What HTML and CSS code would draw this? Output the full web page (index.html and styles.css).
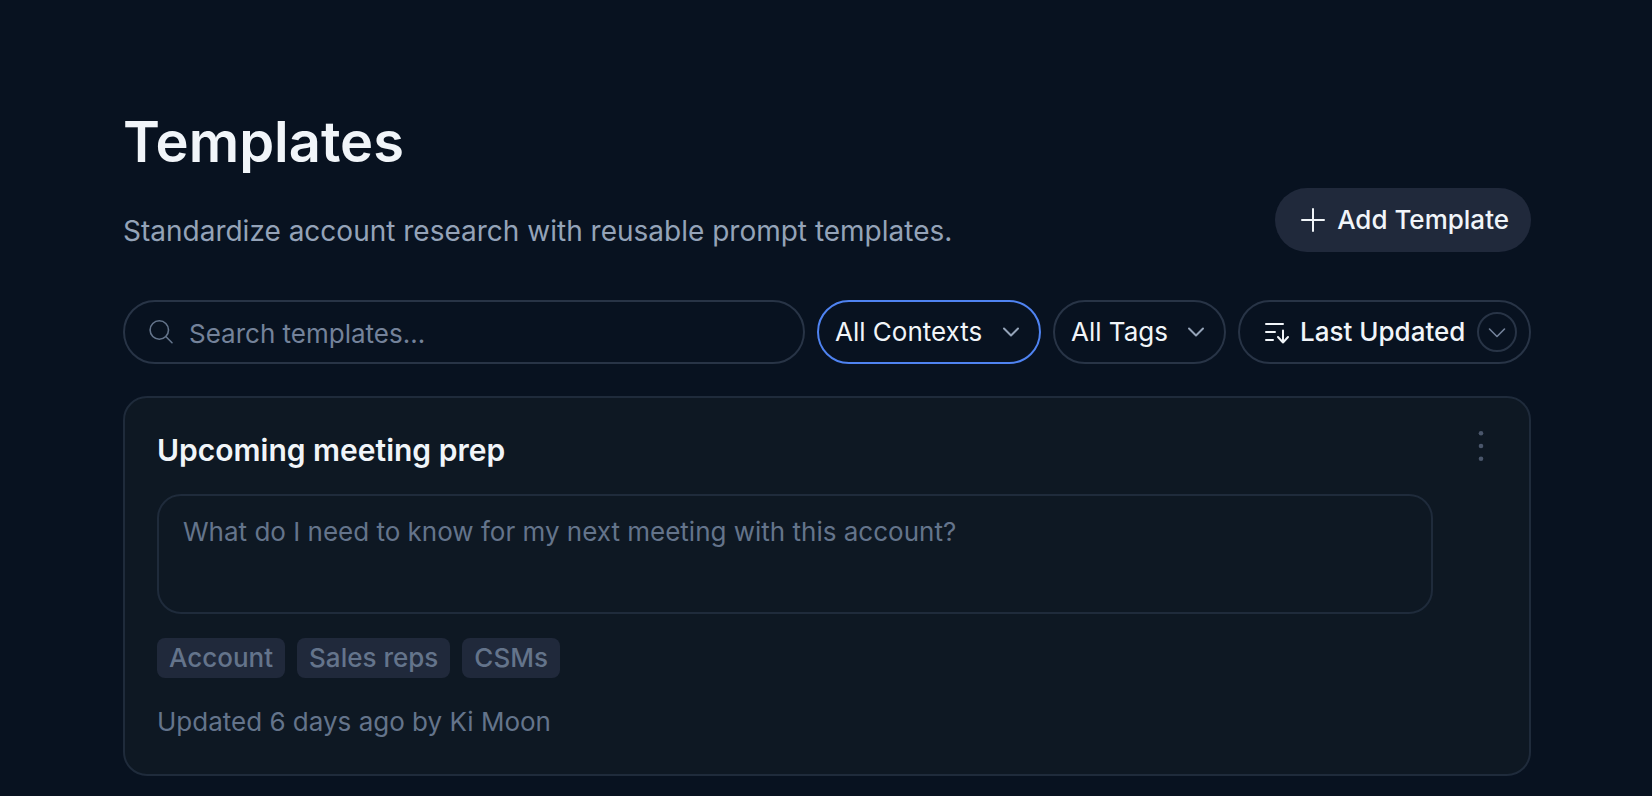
FILE: index.html
```html
<!DOCTYPE html>
<html lang="en">
<head>
<meta charset="utf-8">
<meta name="viewport" content="width=device-width, initial-scale=1">
<title>Templates</title>
<link rel="stylesheet" href="styles.css">
</head>
<body>
<main class="page">
  <header class="page-header">
    <div class="heading">
      <h1 class="title">Templates</h1>
      <p class="subtitle">Standardize account research with reusable prompt templates.</p>
    </div>
    <button class="add-button" type="button">
      <svg class="icon-md" viewBox="0 0 28 28" aria-hidden="true"><path d="M14 3v22M3 14h22"/></svg>
      Add Template
    </button>
  </header>

  <form class="filters">
    <label class="pill search">
      <svg class="icon-md icon-thin" viewBox="0 0 28 28" aria-hidden="true"><circle cx="12.300" cy="12" r="9.200"/><path d="M18.800 18.500l6.200 6.200"/></svg>
      <input class="search-input" type="search" placeholder="Search templates..." aria-label="Search templates">
    </label>
    <label class="pill dropdown dropdown-active">
      <select class="select" aria-label="Context"><option>All Contexts</option></select>
      <svg class="icon-sm" viewBox="0 0 24 24" aria-hidden="true"><path d="M5 8.500l7 7 7-7"/></svg>
    </label>
    <label class="pill dropdown">
      <select class="select" aria-label="Tag"><option>All Tags</option></select>
      <svg class="icon-sm" viewBox="0 0 24 24" aria-hidden="true"><path d="M5 8.500l7 7 7-7"/></svg>
    </label>
    <label class="pill sort">
      <svg class="sort-icon" viewBox="0 0 26 26" aria-hidden="true"><path d="M2 5h17M2 13h9M2 21h7M19 11.500v12M14 18l5 5.500 5-5.500"/></svg>
      <select class="select select-strong" aria-label="Sort by"><option>Last Updated</option></select>
      <span class="ring"><svg class="icon-sm icon-thin" viewBox="0 0 24 24" aria-hidden="true"><path d="M4.500 9l7.500 7.500 7.500-7.500"/></svg></span>
    </label>
  </form>

  <article class="card">
    <div class="card-body">
      <h2 class="card-title">Upcoming meeting prep</h2>
      <textarea class="prompt" rows="2" readonly aria-label="Prompt">What do I need to know for my next meeting with this account?</textarea>
      <ul class="tags">
        <li class="tag">Account</li>
        <li class="tag">Sales reps</li>
        <li class="tag">CSMs</li>
      </ul>
      <p class="updated">Updated 6 days ago by Ki Moon</p>
    </div>
    <button class="menu-button" type="button" aria-label="More actions">
      <svg class="menu-icon" viewBox="0 0 32 32" aria-hidden="true"><circle cx="16" cy="3.200" r="2.300"/><circle cx="16" cy="16" r="2.300"/><circle cx="16" cy="28.800" r="2.300"/></svg>
    </button>
  </article>
</main>
</body>
</html>
```
FILE: styles.css
```css
:root {
  --bg: #081220;
  --surface: #0e1823;
  --fill: #20293b;
  --line: #283446;
  --line-soft: #1f2b3b;
  --accent: #4f83f1;
  --text: #f1f5f9;
  --text-soft: #94a3b8;
  --text-muted: #64748b;
}

* {
  box-sizing: border-box;
}

body {
  margin: 0;
  background: var(--bg);
  color: var(--text);
  font: 400 26px/40px Inter, "Liberation Sans", sans-serif;
}

button,
input,
select,
textarea {
  margin: 0;
  padding: 0;
  border: 0;
  background: none;
  color: inherit;
  font: inherit;
  outline: none;
}

h1,
h2,
p,
ul {
  margin: 0;
  padding: 0;
}

svg {
  display: block;
  flex: none;
  fill: none;
  stroke: currentColor;
  stroke-width: 2;
  stroke-linecap: round;
  stroke-linejoin: round;
}

.page {
  padding: 110px 121px 20px 123px;
}

.page-header {
  display: flex;
  align-items: flex-end;
  justify-content: space-between;
  gap: 32px;
  margin-bottom: 48px;
}

.heading {
  display: flex;
  flex-direction: column;
  gap: 36px;
}

.title {
  font-size: 56px;
  font-weight: 600;
  line-height: 64px;
}

.subtitle {
  color: var(--text-soft);
  font-size: 28px;
  line-height: 42px;
}

.add-button {
  display: flex;
  align-items: center;
  gap: 10px;
  height: 64px;
  padding: 0 22px 0 24px;
  border-radius: 32px;
  background: var(--fill);
  font-weight: 500;
  white-space: nowrap;
}

.icon-sm {
  width: 24px;
  height: 24px;
}

.icon-md {
  width: 28px;
  height: 28px;
}

.icon-thin {
  stroke-width: 1.6;
}

.filters {
  display: flex;
  gap: 12px;
  margin-bottom: 32px;
}

.pill {
  display: flex;
  align-items: center;
  height: 64px;
  border: 2px solid var(--line);
  border-radius: 32px;
}

.search {
  flex: 1;
  gap: 14px;
  min-width: 0;
  padding: 0 22px;
  color: var(--text-muted);
}

.search-input {
  flex: 1;
  min-width: 0;
  height: 42px;
  padding-top: 2px;
  appearance: none;
}

.search-input::placeholder {
  color: #74829a;
  opacity: 1;
}

.dropdown {
  gap: 16px;
  padding: 0 16px;
}

.dropdown-active {
  border-color: var(--accent);
}

.dropdown .icon-sm {
  color: var(--text-soft);
}

.select {
  height: 40px;
  appearance: none;
}

.select-strong {
  font-weight: 500;
}

.sort {
  gap: 10px;
  padding: 0 12px 0 24px;
}

.sort-icon {
  width: 26px;
  height: 26px;
}

.ring {
  display: flex;
  align-items: center;
  justify-content: center;
  width: 40px;
  height: 40px;
  margin-left: 1px;
  border: 2px solid var(--line);
  border-radius: 50%;
  color: #74829a;
}

.card {
  display: flex;
  align-items: flex-start;
  gap: 32px;
  padding: 32px;
  border: 2px solid var(--line-soft);
  border-radius: 24px;
  background: var(--surface);
}

.card-body {
  display: flex;
  flex: 1;
  flex-direction: column;
  gap: 24px;
  min-width: 0;
}

.card-title {
  font-size: 30px;
  font-weight: 600;
  line-height: 40px;
}

.prompt {
  display: block;
  width: 100%;
  padding: 16px 24px 20px;
  border: 2px solid var(--line-soft);
  border-radius: 24px;
  color: var(--text-muted);
  resize: none;
}

.tags {
  display: flex;
  gap: 12px;
  list-style: none;
}

.tag {
  padding: 0 12px;
  border-radius: 8px;
  background: var(--fill);
  color: var(--text-muted);
  font-weight: 500;
}

.updated {
  color: var(--text-muted);
}

.menu-button {
  color: #4a566b;
}

.menu-icon {
  width: 32px;
  height: 32px;
  fill: currentColor;
  stroke: none;
}
```
